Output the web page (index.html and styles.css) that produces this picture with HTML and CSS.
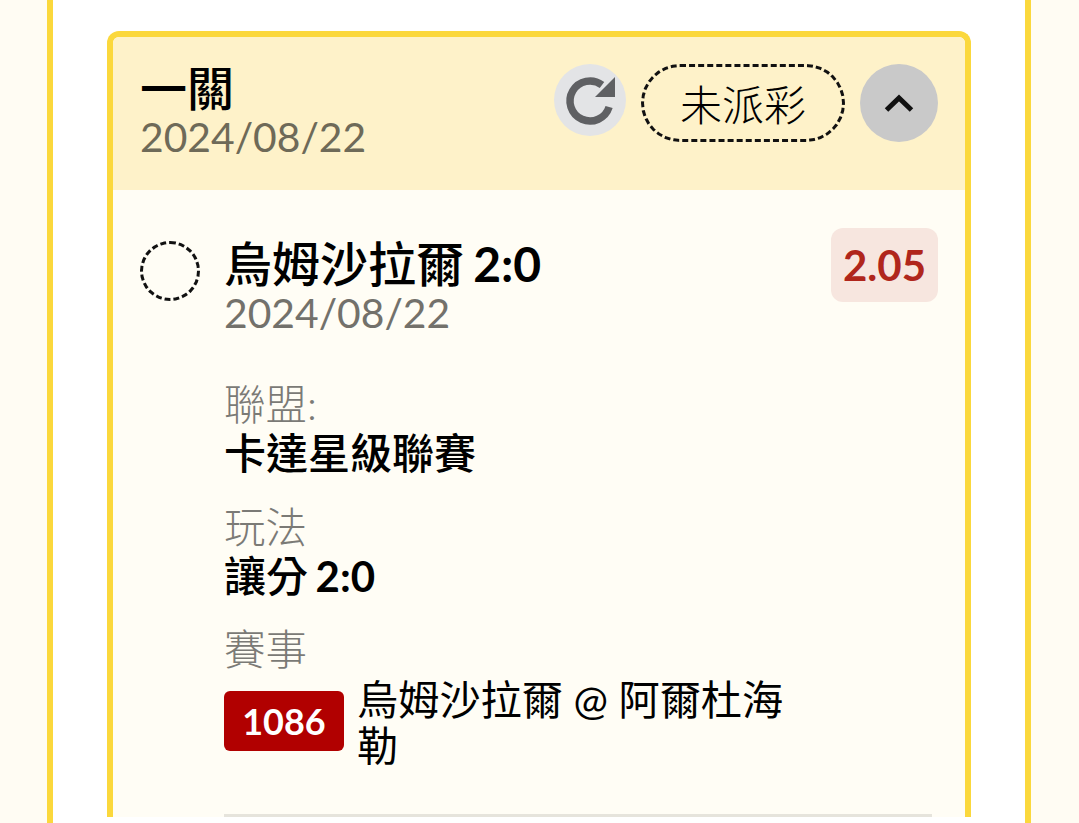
FILE: index.html
```html
<!DOCTYPE html>
<html lang="zh-Hant">
<head>
  <meta charset="UTF-8">
  <meta name="viewport" content="width=device-width, initial-scale=1.0">
  <title>一關</title>
  <link rel="stylesheet" href="styles.css">
</head>
<body>
  <div class="frame">
    <div class="card">
      <div class="card-header">
        <div class="header-text">
          <div class="header-title">一關</div>
          <div class="header-date">2024/08/22</div>
        </div>
        <div class="header-actions">
          <button class="refresh-btn" aria-label="refresh">
            <svg width="72" height="72" viewBox="0 0 72 72">
              <path d="M55.100 43A20 20 0 1 1 48 21" fill="none" stroke="#5f6063" stroke-width="7.500"/>
              <path d="M61 13V33H41Z" fill="#5f6063"/>
            </svg>
          </button>
          <div class="status-pill">未派彩</div>
          <button class="toggle-btn" aria-label="collapse">
            <svg width="32" height="22" viewBox="0 0 32 22">
              <path d="M3.500 18L16 6L28.500 18" fill="none" stroke="#111" stroke-width="5"/>
            </svg>
          </button>
        </div>
      </div>
      <div class="card-body">
        <div class="leg">
          <div class="leg-circle"></div>
          <div class="leg-main">
            <div class="leg-head">
              <div>
                <div class="leg-title">烏姆沙拉爾 <span class="num">2:0</span></div>
                <div class="leg-date">2024/08/22</div>
              </div>
              <div class="odds">2.05</div>
            </div>
            <div class="field field-first">
              <div class="field-label">聯盟:</div>
              <div class="field-value">卡達星級聯賽</div>
            </div>
            <div class="field">
              <div class="field-label">玩法</div>
              <div class="field-value">讓分 <span class="num">2:0</span></div>
            </div>
            <div class="field">
              <div class="field-label">賽事</div>
              <div class="match">
                <span class="match-no">1086</span>
                <span class="match-name">烏姆沙拉爾 @ 阿爾杜海勒</span>
              </div>
            </div>
            <div class="divider"></div>
          </div>
        </div>
      </div>
    </div>
  </div>
</body>
</html>
```

FILE: styles.css
```css
html, body {
  height: 100%;
}

body {
  margin: 0;
  height: 823px;
  overflow: hidden;
  background-color: #fffcf3;
  font-family: Lato, "Noto Sans CJK TC", sans-serif;
  color: #000;
}

.frame {
  box-sizing: border-box;
  width: 984px;
  height: 823px;
  margin-left: 47px;
  padding: 31px 54px 0;
  background-color: #fff;
  border-left: 6px solid #fbd83c;
  border-right: 6px solid #fbd83c;
}

.card {
  border: 6px solid #fbd83c;
  border-bottom: none;
  border-radius: 12px 12px 0 0;
  background-color: #fffdf5;
}

.card-header {
  display: flex;
  justify-content: space-between;
  align-items: flex-start;
  box-sizing: border-box;
  height: 153px;
  padding: 27px 27px 0;
  background-color: #fef2c9;
  border-radius: 6px 6px 0 0;
}

.header-title {
  font-size: 47px;
  line-height: 50px;
  font-weight: 500;
  margin-top: -1px;
}

.header-date {
  font-size: 40.800px;
  line-height: 48px;
  color: #6e6a58;
}

.header-actions {
  display: flex;
  align-items: flex-start;
  gap: 15px;
}

.refresh-btn,
.toggle-btn {
  display: flex;
  align-items: center;
  justify-content: center;
  padding: 0;
  border: none;
  border-radius: 50%;
}

.refresh-btn {
  width: 72px;
  height: 72px;
  background-color: #e3e4e6;
}

.toggle-btn {
  width: 78px;
  height: 78px;
  background-color: #c9c9c9;
}

.status-pill {
  box-sizing: border-box;
  display: flex;
  align-items: center;
  justify-content: center;
  width: 204px;
  height: 78px;
  padding-bottom: 2px;
  border: 3px dashed #111;
  border-radius: 39px;
  font-size: 42px;
  font-weight: 300;
}

.card-body {
  padding: 38px 27px 0;
}

.leg {
  display: flex;
  gap: 24px;
}

.leg-circle {
  flex: none;
  box-sizing: border-box;
  width: 60px;
  height: 60px;
  margin-top: 13px;
  border: 3px dashed #111;
  border-radius: 50%;
}

.leg-main {
  flex: 1;
}

.leg-head {
  display: flex;
  justify-content: space-between;
  align-items: flex-start;
}

.leg-title {
  font-size: 48px;
  line-height: 50px;
  margin-top: 11px;
  font-weight: 500;
}

.num {
  margin-left: -3px;
  font-weight: 700;
}

.leg-date {
  font-size: 40.800px;
  line-height: 47px;
  color: #73716b;
}

.odds {
  width: 107px;
  height: 74px;
  line-height: 74px;
  text-align: center;
  border-radius: 12px;
  background-color: #f7e6df;
  color: #b0261c;
  font-size: 42px;
  font-weight: 700;
}

.field {
  margin-top: 25.500px;
}

.field-first {
  margin-top: 44px;
}

.field-label {
  font-size: 41.500px;
  line-height: 49px;
  font-weight: 300;
  color: #7b7a76;
}

.field-value {
  font-size: 42px;
  line-height: 48px;
  font-weight: 500;
}

.match {
  display: flex;
  align-items: flex-start;
  gap: 13px;
  margin-top: 2px;
}

.match-no {
  flex: none;
  width: 120px;
  height: 60px;
  margin-top: 15px;
  line-height: 60px;
  text-align: center;
  border-radius: 6px;
  background-color: #b10000;
  color: #fff;
  font-size: 36px;
  font-weight: 700;
}

.match-name {
  width: 430px;
  font-size: 41.200px;
  line-height: 46px;
}

.divider {
  height: 3px;
  margin: 46px 6px 0 0;
  background-color: #e6e4dc;
}
```
